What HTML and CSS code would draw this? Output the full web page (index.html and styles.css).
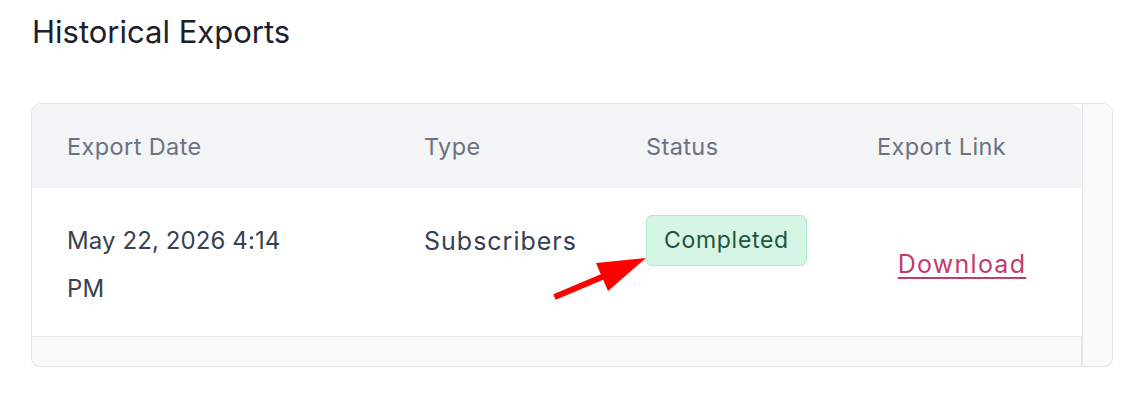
FILE: index.html
```html
<!DOCTYPE html>
<html>
<head>
<meta charset="utf-8">
<link rel="stylesheet" href="styles.css">
</head>
<body>
<h2 class="title">Historical Exports</h2>
<div class="panel">
  <div class="table-area">
    <table class="exports">
      <colgroup>
        <col class="c-date"><col class="c-type"><col class="c-status"><col class="c-link">
      </colgroup>
      <thead>
        <tr><th>Export Date</th><th>Type</th><th>Status</th><th class="last">Export Link</th></tr>
      </thead>
      <tbody>
        <tr>
          <td class="date">May 22, 2026 4:14 PM</td>
          <td class="type">Subscribers</td>
          <td class="status"><span class="badge">Completed</span></td>
          <td class="link"><a href="#">Download</a></td>
        </tr>
      </tbody>
    </table>
  </div>
  <div class="vtrack"></div>
  <div class="htrack"></div>
</div>
<svg class="arrow" width="1142" height="404" viewBox="0 0 1142 404">
  <polygon fill="#ff0000" points="553.3,294.2 600.8,274.2 596,263 646,258 608,291 603.2,279.8 555.7,299.8"/>
</svg>
</body>
</html>
```
FILE: styles.css
```css
html, body {
  margin: 0;
  padding: 0;
  background: #ffffff;
}
body {
  font-family: Inter, "Noto Sans", "DejaVu Sans", sans-serif;
  padding: 0 29px 0 31px;
  position: relative;
}
.title {
  margin: 0;
  padding-top: 12px;
  font-size: 31px;
  line-height: 40px;
  font-weight: 400;
  color: #1a202c;
  padding-left: 1px;
}
.panel {
  margin-top: 51px;
  width: 1080px;
  border: 1px solid #e3e4e8;
  border-radius: 10px;
  overflow: hidden;
  box-shadow: 0 1px 1px rgba(0, 0, 0, 0.08);
  display: grid;
  grid-template-columns: 1050px 30px;
  grid-template-rows: auto 29px;
}
.table-area {
  grid-column: 1;
  grid-row: 1;
}
.exports {
  border-collapse: separate;
  border-spacing: 0;
  table-layout: fixed;
  width: 1050px;
}
.c-date { width: 357px; }
.c-type { width: 222px; }
.c-status { width: 231px; }
.c-link { width: 240px; }
.exports th {
  background: #f3f4f6;
  height: 84px;
  padding: 0 0 0 35px;
  text-align: left;
  vertical-align: middle;
  font-size: 23.5px;
  letter-spacing: 0.4px;
  font-weight: 400;
  color: #6b7280;
}
.exports th.last {
  border-top-right-radius: 12px;
}
.exports td {
  vertical-align: top;
  padding: 29px 20px 23px 35px;
  font-size: 24px;
  line-height: 48px;
  color: #374151;
  border-bottom: 1px solid #e5e7eb;
}
.exports td.date {
  letter-spacing: 0.1px;
  padding-right: 80px;
}
.exports td.type {
  font-size: 25px;
  letter-spacing: 1px;
}
.exports td.status {
  padding-top: 27px;
}
.badge {
  display: inline-block;
  background: #d5f6e5;
  border: 1px solid #abeccb;
  border-radius: 6px;
  padding: 11px 17px;
  font-size: 23px;
  line-height: 27px;
  letter-spacing: 0.7px;
  color: #22543d;
}
.exports td.link {
  vertical-align: middle;
  text-align: center;
  padding: 4px 0 0 0;
}
.link a {
  color: #c53a6e;
  font-size: 25px;
  letter-spacing: 1.25px;
  text-decoration: underline;
  text-underline-offset: 4px;
  text-decoration-thickness: 2px;
}
.vtrack {
  grid-column: 2;
  grid-row: 1 / span 2;
  background: #fafafa;
  border-left: 1px solid #e6e6e8;
}
.htrack {
  grid-column: 1;
  grid-row: 2;
  background: #fafafa;
  border-right: 1px solid #e6e6e8;
}
.arrow {
  position: absolute;
  left: 0;
  top: 0;
  pointer-events: none;
}
```
